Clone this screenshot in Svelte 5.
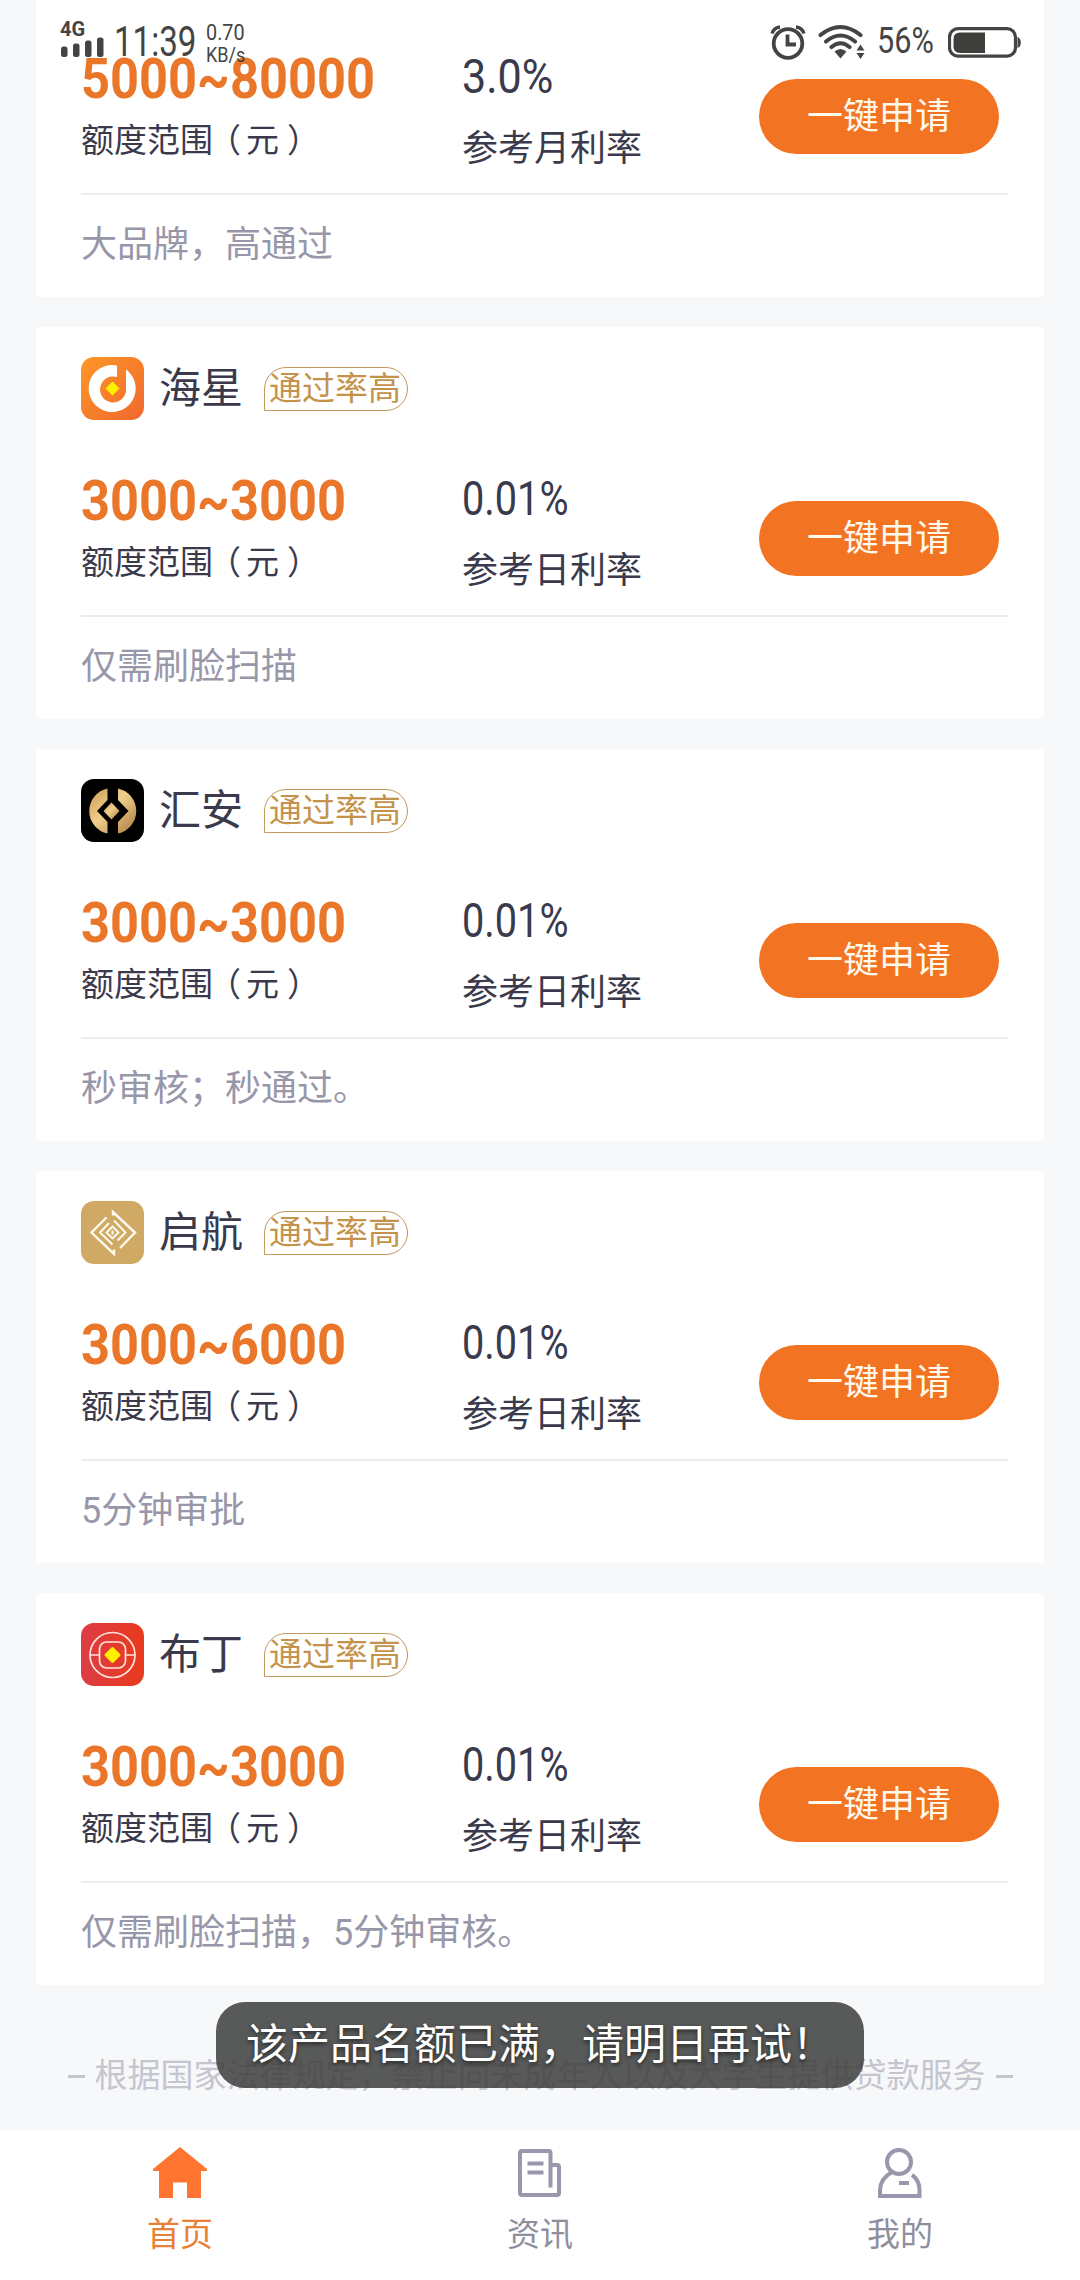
<script lang="ts">
	type Loan = {
		logo: string;
		name: string;
		range: string;
		rate: string;
		rateLabel: string;
		note: string;
	};

	const loans: Loan[] = [
		{ logo: '', name: '', range: '5000~80000', rate: '3.0%', rateLabel: '参考月利率', note: '大品牌，高通过' },
		{ logo: 'haixing', name: '海星', range: '3000~3000', rate: '0.01%', rateLabel: '参考日利率', note: '仅需刷脸扫描' },
		{ logo: 'huian', name: '汇安', range: '3000~3000', rate: '0.01%', rateLabel: '参考日利率', note: '秒审核；秒通过。' },
		{ logo: 'qihang', name: '启航', range: '3000~6000', rate: '0.01%', rateLabel: '参考日利率', note: '5分钟审批' },
		{ logo: 'buding', name: '布丁', range: '3000~3000', rate: '0.01%', rateLabel: '参考日利率', note: '仅需刷脸扫描，5分钟审核。' },
	];

	let active = $state('home');
	let toast = $state('该产品名额已满，请明日再试！');

	function apply() {
		toast = '该产品名额已满，请明日再试！';
	}
</script>

<div class="screen">
	<header class="status">
		<div class="status-left">
			<div class="signal">
				<span class="net">4G</span>
				<svg width="43" height="20" viewBox="0 0 43 20" fill="#444">
					<rect x="0" y="9.5" width="6.5" height="10.5" rx="2.5" />
					<rect x="12" y="6.5" width="6.5" height="13.5" rx="2.5" />
					<rect x="24" y="3.5" width="6.5" height="16.5" rx="2.5" />
					<rect x="36" y="0.5" width="6.5" height="19.5" rx="2.5" />
				</svg>
			</div>
			<span class="time">11:39</span>
			<div class="speed"><span>0.70</span><span class="unit">KB/s</span></div>
		</div>
		<div class="status-right">
			<svg class="alarm" width="36" height="36" viewBox="0 0 36 36" fill="none" stroke="#444">
				<circle cx="18" cy="19.5" r="14.3" stroke-width="3.8" />
				<path d="M17.500 10.500v10h8.500" stroke-width="3.800" />
				<path d="M2 9.500Q4 3.500 10 3M34 9.500Q32 3.500 26 3" stroke-width="3.400" />
			</svg>
			<svg class="wifi" width="47" height="36" viewBox="0 0 47 36" fill="none" stroke="#444" stroke-width="4.100" stroke-linecap="round">
				<path d="M2.500 11Q22.500-5 42.500 11M8 17.500Q22.500 5.500 37 17.500M13.500 23Q22.500 15.500 31.500 23" />
				<path d="M16.500 27.500Q22.500 22.500 28.500 27.500L22.500 34.500Z" fill="#444" stroke="none" />
				<path d="M38.500 26.500L42.500 20.500L46.500 26.500ZM38.500 29L42.500 35L46.500 29Z" fill="#444" stroke="none" />
			</svg>
			<span class="percent">56%</span>
			<svg width="73" height="32" viewBox="0 0 73 32">
				<rect x="1.500" y="1.700" width="66" height="27.500" rx="8.500" fill="none" stroke="#444" stroke-width="3.200" />
				<path d="M37 5.500V26H12Q5.500 26 5.500 19.500V12Q5.500 5.500 12 5.500Z" fill="#3e3e3a" />
				<path d="M69.500 10Q72.800 11 72.800 15.500T69.500 21Z" fill="#444" />
			</svg>
		</div>
	</header>

	<main class="list">
		{#each loans as loan}
			<section class="card">
				<div class="head">
					{#if loan.logo}
						<svg class="logo" viewBox="0 0 63 63">
							{#if loan.logo === 'haixing'}
								<defs>
									<linearGradient id="orange" x1="0" y1="0" x2="1" y2="1">
										<stop offset="0" stop-color="#fd9727" />
										<stop offset="1" stop-color="#f0682f" />
									</linearGradient>
								</defs>
								<rect width="63" height="63" rx="13" fill="url(#orange)" />
								<path d="M36 8.500A23.500 23.500 0 1 0 45 12.500V31A13 13 0 1 1 36 20Z" fill="#fff" />
								<path d="M31.500 24.500L38.500 31.500L31.500 38.500L24.500 31.500Z" fill="#fff000" />
							{:else if loan.logo === 'huian'}
								<defs>
									<linearGradient id="gold" x1="0" y1="0" x2="1" y2="1">
										<stop offset="0" stop-color="#c99a55" />
										<stop offset="0.45" stop-color="#f0cf8a" />
										<stop offset="1" stop-color="#a9773f" />
									</linearGradient>
								</defs>
								<rect width="63" height="63" rx="13" fill="#000" />
								<path d="M26.500 9.500A23 23 0 0 0 26.500 54.500V43L16 32L26.500 21ZM37 9.500A23 23 0 0 1 37 54.500V43L47.500 32L37 21Z" fill="url(#gold)" />
								<path d="M30.500 23.500L38.500 32L30.500 40.500L22.500 32Z" fill="url(#gold)" />
							{:else if loan.logo === 'qihang'}
								<rect width="63" height="63" rx="13" fill="#d0aa64" />
								<g fill="none" stroke="#fffaf0" stroke-width="2.400">
									<path d="M25.500 16.500L10.500 31.500L33 53V48.500" />
									<path d="M32 14.500V11L54 31.500L39 47" />
									<path d="M28 22L19 31.500L31.500 43.500M33 19.500L44.500 31.500L36.500 39.500" stroke-width="1.900" />
									<path d="M31.500 25.500L37.500 31.500L31.500 37.500L25.500 31.500Z" stroke-width="1.900" />
									<path d="M31.500 29.500V33.500" stroke-width="2" />
								</g>
							{:else}
								<defs>
									<linearGradient id="red" x1="0" y1="0" x2="1" y2="0">
										<stop offset="0" stop-color="#dc3c44" />
										<stop offset="1" stop-color="#e93a1c" />
									</linearGradient>
								</defs>
								<rect width="63" height="63" rx="13" fill="url(#red)" />
								<g fill="none" stroke="#ffe3dc" stroke-width="1.700">
									<circle cx="31.500" cy="32" r="22.500" />
									<rect x="18.500" y="19" width="26" height="26" rx="7" />
									<path d="M9 32H18.500M44.500 32H54" />
								</g>
								<path d="M31.500 25.500L38 32L31.500 38.500L25 32Z" fill="#fff000" stroke="#fff000" stroke-width="3" stroke-linejoin="round" />
							{/if}
						</svg>
						<h2 class="name">{loan.name}</h2>
						<span class="tag">通过率高</span>
					{/if}
				</div>

				<div class="body">
					<div class="range">
						<strong class="amount">{loan.range}</strong>
						<span class="range-label">额度范围<span class="open">（</span>元<span class="close">）</span></span>
					</div>
					<div class="rate">
						<span class="rate-value" class:wide={loan.rate.length < 5}>{loan.rate}</span>
						<span class="rate-label">{loan.rateLabel}</span>
					</div>
					<button class="apply" onclick={apply}>一键申请</button>
				</div>

				<p class="note">{loan.note}</p>
			</section>
		{/each}

		<p class="legal"><i></i>根据国家法律规定，禁止向未成年人以及大学生提供贷款服务<i></i></p>
	</main>

	<nav class="tabs">
		<button class="tab" class:active={active === 'home'} onclick={() => (active = 'home')}>
			<svg width="56" height="54" viewBox="0 0 56 54">
				<path d="M28 2L55 24V26H49V53H35V37.500H21V53H7V26H1V24Z" fill="#ff7430" />
			</svg>
			<span>首页</span>
		</button>
		<button class="tab" class:active={active === 'news'} onclick={() => (active = 'news')}>
			<svg width="56" height="54" viewBox="0 0 56 54" fill="none" stroke="#9897ab" stroke-width="4">
				<path d="M38.500 42.500V8Q38.500 6 36.500 6H10Q8 6 8 8V48Q8 50 10 50H45Q47 50 47 48V22Q47 20 45 20H39" />
				<path d="M15.500 18.500H31.500M15.500 27.500H31.500" />
			</svg>
			<span>资讯</span>
		</button>
		<button class="tab" class:active={active === 'mine'} onclick={() => (active = 'mine')}>
			<svg width="56" height="54" viewBox="0 0 56 54" fill="none" stroke="#9897ab" stroke-width="4">
				<circle cx="27" cy="17" r="12" />
				<path d="M20 27Q8 34 8 45V51H47.500V45Q47.500 35 40 30" />
				<path d="M27 38H37" />
			</svg>
			<span>我的</span>
		</button>
	</nav>

	{#if toast}
		<div class="toast">{toast}</div>
	{/if}
</div>

<style>
	:global(body) {
		margin: 0;
		background: #f7f8fa;
	}

	.screen {
		position: relative;
		display: flex;
		flex-direction: column;
		width: 1080px;
		height: 2280px;
		overflow: hidden;
		background: #f7f8fa;
		font-family: Roboto, 'Noto Sans CJK SC', sans-serif;
		color: #3a3a4c;
	}

	/* the system bar floats over the scrolled list */
	.status {
		position: absolute;
		z-index: 2;
		top: 0;
		left: 0;
		right: 0;
		display: flex;
		justify-content: space-between;
		align-items: flex-start;
		padding: 21px 59px 0 60px;
		color: #444;
		line-height: 1;
	}

	.status-left,
	.status-right {
		display: flex;
		align-items: flex-start;
	}

	.signal {
		display: flex;
		flex-direction: column;
		width: 54px;
	}

	.signal svg {
		margin-left: 1px;
	}

	.net {
		height: 16px;
		font-size: 20px;
		line-height: 17px;
		font-weight: 700;
	}

	.time {
		width: 92px;
		font-size: 43px;
		line-height: 40px;
		transform: scaleX(0.77);
		transform-origin: left;
		white-space: nowrap;
	}

	.speed {
		display: flex;
		flex-direction: column;
		font-size: 22px;
		line-height: 23px;
		transform: scaleX(0.9);
		transform-origin: left;
	}

	.unit {
		font-size: 20px;
	}

	.alarm {
		margin: 3px 12px 0 0;
	}

	.wifi {
		margin: 3px 12px 0 0;
	}

	.percent {
		width: 71px;
		font-size: 36px;
		line-height: 41px;
		transform: scaleX(0.85);
		transform-origin: left;
	}

	.status-right svg:last-child {
		margin-top: 6px;
	}

	.list {
		flex: 1;
		min-height: 0;
		display: flex;
		flex-direction: column;
		gap: 30px;
		margin-top: -95px;
		padding: 0 36px;
	}

	.card {
		flex: none;
		box-sizing: border-box;
		height: 392px;
		padding: 30px 36px 0 45px;
		border-radius: 4px;
		background: #fff;
	}

	.head {
		display: flex;
		align-items: center;
		height: 63px;
	}

	.logo {
		width: 63px;
		height: 63px;
		margin-right: 15px;
	}

	.name {
		margin: 0 21px 0 0;
		font-size: 42px;
		line-height: 60px;
		font-weight: 400;
	}

	.tag {
		box-sizing: border-box;
		width: 144px;
		height: 44px;
		border: 1.5px solid #c19a5c;
		border-radius: 22px 22px 22px 0;
		color: #c4924a;
		font-size: 33px;
		line-height: 41px;
		text-indent: 4px;
		white-space: nowrap;
	}

	.body {
		display: flex;
		align-items: flex-start;
		height: 195px;
		border-bottom: 2px solid #ececee;
	}

	.range {
		display: flex;
		flex-direction: column;
		width: 381px;
		padding-top: 49px;
	}

	.amount {
		align-self: flex-start;
		color: #e97629;
		font-size: 55px;
		line-height: 64px;
		font-weight: 700;
		transform: scaleX(0.92);
		transform-origin: left;
	}

	.range-label {
		margin-top: 5px;
		font-size: 33px;
		line-height: 50px;
	}

	.open {
		margin: 0 5px 0 -5px;
	}

	.close {
		margin-left: 8px;
	}

	.rate {
		display: flex;
		flex-direction: column;
		width: 297px;
		padding-top: 48px;
	}

	.rate-value {
		align-self: flex-start;
		font-size: 49px;
		line-height: 62px;
		transform: scaleX(0.81);
		transform-origin: left;
	}

	.rate-value.wide {
		transform: scaleX(0.88);
	}

	.rate-label {
		margin-top: 14px;
		font-size: 36px;
		line-height: 54px;
	}

	.apply {
		width: 240px;
		height: 75px;
		margin-top: 81px;
		padding: 0;
		border: none;
		border-radius: 38px;
		background: #f27321;
		color: #fff8ec;
		font-family: inherit;
		font-size: 36px;
		line-height: 74px;
	}

	.note {
		margin: 0;
		color: #9897a9;
		font-size: 36px;
		line-height: 101px;
	}

	.legal {
		display: flex;
		justify-content: center;
		align-items: center;
		gap: 10px;
		margin: -1px 0 0;
		color: #c4c5cf;
		font-size: 33px;
		line-height: 46px;
		white-space: nowrap;
		padding-top: 39px;
	}

	.legal i {
		width: 17px;
		height: 3px;
		background: #c4c5cf;
	}

	.tabs {
		flex: none;
		display: flex;
		height: 150px;
		background: #fff;
	}

	.tab {
		flex: 1;
		display: flex;
		flex-direction: column;
		align-items: center;
		padding: 15px 0 0;
		border: none;
		background: none;
		color: #8e8e9c;
		font-family: inherit;
		font-size: 33px;
		line-height: 48px;
	}

	.tab span {
		margin-top: 12px;
	}

	.tab.active {
		color: #e88135;
	}

	.toast {
		position: absolute;
		top: 2002px;
		left: 216px;
		box-sizing: border-box;
		width: 648px;
		height: 86px;
		padding-left: 30px;
		border-radius: 29px;
		background: rgba(66, 66, 66, 0.88);
		color: #fff;
		font-size: 42px;
		line-height: 85px;
		text-shadow: 0 2px 4px rgba(0, 0, 0, 0.6);
		white-space: nowrap;
	}
</style>
